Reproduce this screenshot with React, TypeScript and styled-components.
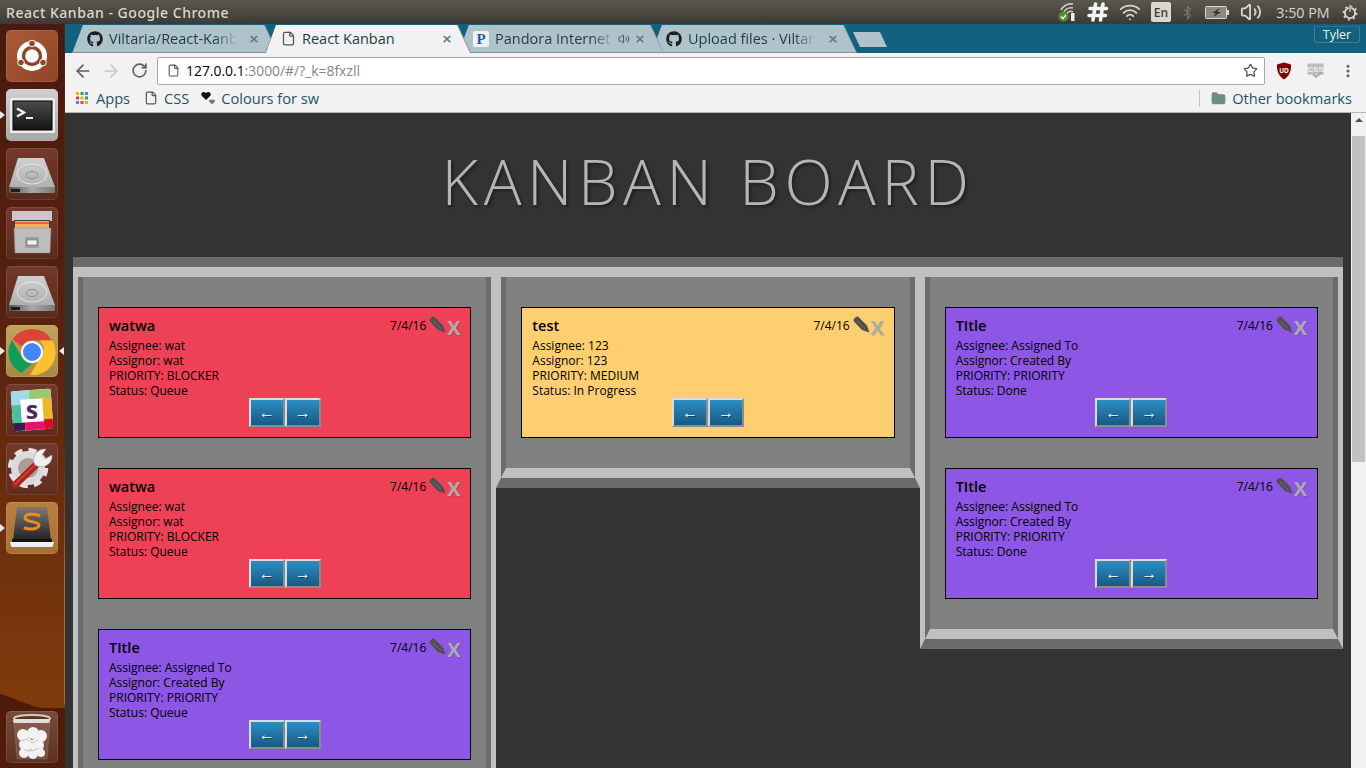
import React from "react";
import styled, { createGlobalStyle } from "styled-components";
import { ArrowLeft, ArrowRight, RotateCw, Star, File, Folder, Wifi, Bluetooth, Volume2, MoreVertical } from "lucide-react";
import { FaGithub } from "react-icons/fa";

const GlobalStyle = createGlobalStyle`
  html, body { margin: 0; padding: 0; height: 100%; overflow: hidden; }
  body { font-family: "Open Sans", "Liberation Sans", sans-serif; background: #333; }
  * { box-sizing: border-box; }
`;

const Desktop = styled.div`
  width: 1366px;
  height: 768px;
  display: flex;
  flex-direction: column;
  overflow: hidden;
`;

const TitleBar = styled.div`
  height: 24px;
  flex: none;
  display: flex;
  align-items: center;
  padding: 0 8px 0 6px;
  background: linear-gradient(#5b574d, #3b3a36);
  color: #dcd8cf;
`;

const WindowTitle = styled.div`
  flex: 1;
  font-family: "Noto Sans", sans-serif;
  font-size: 14px;
  font-weight: 500;
  letter-spacing: 0.53px;
`;

const Tray = styled.div`
  display: flex;
  align-items: center;
  color: #d9d5cc;
`;

const TrayItem = styled.div<{ $w: number }>`
  width: ${(p) => p.$w}px;
  height: 24px;
  display: flex;
  align-items: center;
  justify-content: center;
`;

const LangBox = styled.div`
  width: 20px;
  height: 20px;
  border-radius: 2px;
  background: #dcd8cf;
  color: #3c3b37;
  font-size: 12px;
  font-weight: 600;
  display: flex;
  align-items: center;
  justify-content: center;
`;

const Clock = styled.div`
  font-size: 14.3px;
  white-space: nowrap;
`;

const Body = styled.div`
  flex: 1;
  display: flex;
  min-height: 0;
`;

const Launcher = styled.div`
  position: relative;
  width: 65px;
  flex: none;
  display: flex;
  flex-direction: column;
  gap: 7px;
  padding: 6px 0 5px 6px;
  background: linear-gradient(#4a190f 0, #54200f 35%, #6c2d0d 65%, #84400b 100%);
  border-right: 1px solid;
  border-image: linear-gradient(#4f2410 55%, #b06f1c 75%, #b06f1c 91%, #4e1c09 92%) 1;
`;

const Wave = styled.svg`
  position: absolute;
  left: 0;
  bottom: 0;
`;

const Tile = styled.div<{ $bg: string; $left?: boolean; $right?: boolean; $end?: boolean }>`
  position: relative;
  width: 52px;
  height: 52px;
  flex: none;
  border-radius: 5px;
  background: ${(p) => p.$bg};
  box-shadow: inset 0 0 0 1px rgba(255, 255, 255, 0.1);
  margin-top: ${(p) => (p.$end ? "auto" : "0")};
  svg { display: block; }
  &::before {
    content: "";
    display: ${(p) => (p.$left ? "block" : "none")};
    position: absolute;
    left: -6px;
    top: 22px;
    border: 4px solid transparent;
    border-left: 5px solid #e8e8e8;
  }
  &::after {
    content: "";
    display: ${(p) => (p.$right ? "block" : "none")};
    position: absolute;
    right: -6px;
    top: 22px;
    border: 4px solid transparent;
    border-right: 5px solid #e8e8e8;
  }
`;

const Browser = styled.div`
  flex: 1;
  min-width: 0;
  display: flex;
  flex-direction: column;
`;

const TabStrip = styled.div`
  height: 29px;
  flex: none;
  display: flex;
  align-items: flex-end;
  padding: 0 6px 0 7px;
  background: #12617f;
`;

const Tab = styled.div<{ $active?: boolean; $z: number }>`
  position: relative;
  z-index: ${(p) => p.$z};
  width: 206px;
  height: 28px;
  flex: none;
  margin-right: -13px;
  padding: 0 17px 1px 15px;
  display: flex;
  align-items: center;
  font-size: 14.5px;
  color: #1f3b47;
  &::before, &::after {
    content: "";
    position: absolute;
    inset: 0;
    z-index: -1;
  }
  &::before {
    background: #7f929b;
    clip-path: polygon(0 100%, 11px 0, 193px 0, 206px 100%);
  }
  &::after {
    background: ${(p) => (p.$active ? "#f2f2f2" : "#aec3ca")};
    clip-path: polygon(1px 100%, 11px 0, 192px 0, 205px 100%);
    bottom: ${(p) => (p.$active ? "0" : "1px")};
  }
`;

const TabIcon = styled.div`
  width: 16px;
  height: 16px;
  flex: none;
  margin-right: 6px;
  display: flex;
  align-items: center;
  justify-content: center;
  color: #1b1f23;
`;

const PandoraIcon = styled.div`
  width: 16px;
  height: 16px;
  border-radius: 2px;
  background: #eef2f6;
  color: #1d5da8;
  font-family: "Liberation Serif", serif;
  font-weight: 700;
  font-size: 15px;
  line-height: 16px;
  text-align: center;
`;

const TabLabel = styled.div<{ $fade?: boolean }>`
  flex: 1;
  min-width: 0;
  white-space: nowrap;
  -webkit-mask-image: ${(p) => (p.$fade ? "linear-gradient(to right, #000 calc(100% - 26px), transparent calc(100% - 4px))" : "none")};
  mask-image: ${(p) => (p.$fade ? "linear-gradient(to right, #000 calc(100% - 26px), transparent calc(100% - 4px))" : "none")};
`;

const TabSound = styled(Volume2)`
  flex: none;
  margin-right: -3px;
`;

const TabClose = styled.div`
  width: 14px;
  flex: none;
  margin-left: 6px;
  font-family: "DejaVu Sans", sans-serif;
  font-size: 13px;
  font-weight: 700;
  color: #6a7478;
  text-align: center;
`;

const NewTab = styled.div`
  width: 34px;
  height: 15px;
  margin: 0 0 6px 9px;
  flex: none;
  background: #aec3ca;
  clip-path: polygon(0 0, 27px 0, 34px 100%, 7px 100%);
`;

const Profile = styled.div`
  margin: 0 0 10px auto;
  width: 46px;
  height: 17px;
  border: 1px solid #3e7f98;
  border-top-color: #2a7390;
  border-radius: 0 0 3px 3px;
  color: #f2f2f2;
  font-size: 12.5px;
  line-height: 15px;
  text-align: center;
`;

const Toolbar = styled.div`
  height: 32px;
  flex: none;
  display: flex;
  align-items: flex-start;
  padding: 4px 0 0 4px;
  background: #f2f2f2;
`;

const NavButton = styled.div<{ $off?: boolean }>`
  width: 28px;
  height: 27px;
  flex: none;
  display: flex;
  align-items: center;
  justify-content: center;
  color: ${(p) => (p.$off ? "#c9c9c9" : "#5f5f5f")};
`;

const Omnibox = styled.div`
  width: 1108px;
  height: 28px;
  margin-left: 4px;
  flex: none;
  display: flex;
  align-items: center;
  padding: 0 6px 1px 9px;
  background: #fff;
  border: 1px solid #a9a9a9;
  border-radius: 2px;
  font-size: 13.9px;
  color: #858585;
`;

const Host = styled.span`
  color: #000;
`;

const Url = styled.div`
  flex: 1;
  margin-left: 6px;
  white-space: nowrap;
`;

const ExtSlot = styled.div<{ $w: number }>`
  width: ${(p) => p.$w}px;
  height: 27px;
  flex: none;
  display: flex;
  align-items: center;
  justify-content: center;
  color: #5f5f5f;
`;

const Bookmarks = styled.div`
  height: 28px;
  flex: none;
  display: flex;
  align-items: center;
  padding: 0 14px 1px 11px;
  background: #f2f2f2;
  border-bottom: 1px solid #b5b5b5;
  font-size: 14.6px;
  color: #1d5468;
`;

const Bookmark = styled.div<{ $gap: number; $mr?: number }>`
  display: flex;
  align-items: center;
  gap: ${(p) => p.$gap}px;
  margin-right: ${(p) => p.$mr ?? 14}px;
  white-space: nowrap;
  &:last-child { margin-right: 0; }
`;

const BarDivider = styled.div`
  width: 1px;
  height: 17px;
  margin: 0 11px 0 auto;
  background: #c4c4c4;
`;

const Viewport = styled.div`
  flex: 1;
  min-height: 0;
  display: flex;
`;

const Page = styled.div`
  flex: 1;
  min-width: 0;
  overflow: hidden;
  background: #333;
  padding: 0 8px;
`;

const Heading = styled.h1`
  height: 144px;
  margin: 0;
  padding: 24px 0 0;
  font-size: 63px;
  font-weight: 300;
  line-height: 87px;
  letter-spacing: 5.55px;
  text-align: center;
  color: #b5b5b5;
  text-shadow: 2px 2px 3px #1f1f1f;
`;

const BoardFrame = styled.div`
  border-top: 10px solid #6b6b6b;
`;

const Board = styled.div`
  display: flex;
  align-items: flex-start;
  border-top: 10px solid #c0c0c0;
`;

const Column = styled.div`
  flex: 1 1 0;
  min-width: 0;
  border-style: solid;
  border-width: 0 5px 10px;
  border-color: transparent #c0c0c0 #6b6b6b #c0c0c0;
`;

const ColumnInner = styled.div`
  border-style: solid;
  border-width: 0 5px 10px;
  border-color: transparent #6b6b6b #c0c0c0 #6b6b6b;
  background: #808080;
  padding: 30px 15px;
  display: flex;
  flex-direction: column;
  gap: 30px;
`;

const Card = styled.div<{ $bg: string }>`
  height: 131px;
  flex: none;
  padding: 8px 10px 10px;
  border: 1px solid #000;
  background: ${(p) => p.$bg};
  color: #000;
  font-size: 12px;
  line-height: 15px;
`;

const CardTop = styled.div`
  height: 22px;
  margin-right: -1px;
  display: flex;
  align-items: flex-start;
`;

const CardTitle = styled.div`
  flex: 1;
  font-size: 14.5px;
  font-weight: 600;
  line-height: 20px;
`;

const CardDate = styled.div`
  line-height: 20px;
`;

const EditSlot = styled.div`
  width: 19px;
  height: 18px;
  margin-left: 1px;
  padding: 0 0 0 2px;
`;

const DeleteGlyph = styled.div`
  width: 15px;
  font-family: "Open Sans", sans-serif;
  font-size: 20px;
  font-weight: 700;
  line-height: 24px;
  color: #acacac;
  text-align: center;
  text-shadow: 1px 1px 1px rgba(0, 0, 0, 0.12);
`;

const CardLine = styled.div`
  height: 15px;
  white-space: nowrap;
`;

const MoveRow = styled.div`
  display: flex;
  justify-content: center;
`;

const MoveButton = styled.button`
  width: 36px;
  height: 29px;
  padding: 0;
  border-style: solid;
  border-width: 2px;
  border-color: #dcdcdc #8c8c8c #8c8c8c #dcdcdc;
  background: linear-gradient(#2b8ec4, #175a84);
  color: #fff;
  font-family: "Liberation Sans", sans-serif;
  font-size: 16px;
  line-height: 20px;
  text-shadow: 1px 1px 0 #123c57;
`;

const Scrollbar = styled.div`
  width: 15px;
  flex: none;
  position: relative;
  background: #f1f1f1;
  display: flex;
  flex-direction: column;
  align-items: center;
`;

const ScrollUp = styled.div`
  margin-top: 5px;
  border: 4px solid transparent;
  border-top: none;
  border-bottom: 4px solid #505050;
`;

const ScrollThumb = styled.div`
  width: 13px;
  height: 326px;
  margin-top: 14px;
  background: #c1c1c1;
`;

const PencilIcon = () => (
  <svg width="17" height="17" viewBox="0 0 17 17">
    <path d="M1 5.500C0.200 4.500 0.300 3.500 1 2.700L3 0.900C3.800 0.200 4.800 0.300 5.500 1L14 9.500 16.500 16.500 9 14z" fill="#505050" />
    <path d="M4 5l8 7.500" stroke="#7a6a70" strokeWidth="1" />
  </svg>
);

const UbuntuIcon = () => (
  <svg width="52" height="52" viewBox="0 0 52 52">
    <circle cx="26" cy="26" r="15" fill="#fff" />
    <circle cx="26" cy="26" r="8.500" fill="none" stroke="#8f4526" strokeWidth="3.400" />
    <circle cx="26" cy="13.500" r="3.300" fill="#8f4526" stroke="#fff" />
    <circle cx="15" cy="32.500" r="3.300" fill="#8f4526" stroke="#fff" />
    <circle cx="37" cy="32.500" r="3.300" fill="#8f4526" stroke="#fff" />
  </svg>
);

const TerminalIcon = () => (
  <svg width="52" height="52" viewBox="0 0 52 52">
    <defs>
      <linearGradient id="term" x1="0" y1="0" x2="0" y2="1">
        <stop offset="0" stopColor="#4b4b4b" />
        <stop offset="1" stopColor="#141414" />
      </linearGradient>
    </defs>
    <rect x="4" y="9" width="45" height="35" rx="1" fill="#ececec" />
    <rect x="7" y="12" width="39" height="29" fill="url(#term)" stroke="#000" />
    <path d="M11 19.500l7 4-7 4" fill="none" stroke="#eee" strokeWidth="2.400" />
    <rect x="20" y="28" width="7" height="2" fill="#eee" />
  </svg>
);

const DiskIcon = ({ id }: { id: string }) => (
  <svg width="52" height="52" viewBox="0 0 52 52">
    <defs>
      <linearGradient id={id} x1="0" y1="0" x2="0" y2="1">
        <stop offset="0" stopColor="#d0d0d0" />
        <stop offset="1" stopColor="#b0b0b0" />
      </linearGradient>
      <linearGradient id={`${id}b`} x1="0" y1="0" x2="1" y2="0">
        <stop offset="0" stopColor="#555" />
        <stop offset="0.5" stopColor="#aaa" />
        <stop offset="1" stopColor="#777" />
      </linearGradient>
    </defs>
    <path d="M12 10H38L49 39H3z" fill={`url(#${id})`} />
    <path d="M3 39H49V44a1 1 0 0 1-1 1H4a1 1 0 0 1-1-1z" fill={`url(#${id}b)`} />
    <rect x="5" y="41" width="9" height="3" fill="#1c1c1c" />
    <ellipse cx="26" cy="26" rx="15" ry="10" fill="none" stroke="#e6e6e6" />
    <ellipse cx="26" cy="27" rx="6" ry="3.500" fill="none" stroke="#8e8e8e" />
  </svg>
);

const FilesIcon = () => (
  <svg width="52" height="52" viewBox="0 0 52 52">
    <rect x="6" y="4" width="40" height="10" fill="#c9c9c9" />
    <rect x="8" y="13" width="36" height="10" fill="#3a3a3a" />
    <rect x="9" y="14" width="34" height="8" fill="#eeb35a" />
    <rect x="9" y="15" width="34" height="2" fill="#e06a34" />
    <path d="M8 21H45L44 46H9z" fill="#bdbdbd" stroke="#8a8a8a" strokeWidth="0.500" />
    <rect x="19" y="30" width="14" height="11" rx="1.500" fill="#9f9f9f" />
    <rect x="21" y="33" width="10" height="5" fill="#f2f2f2" stroke="#555" strokeWidth="0.500" />
  </svg>
);

const ChromeIcon = () => (
  <svg width="52" height="52" viewBox="0 0 52 52">
    <path d="M26 4a23 23 0 0 1 20 11.500H26a11.500 11.500 0 0 0-10 5.800L6.500 14.500A23 23 0 0 1 26 4z" fill="#db4437" />
    <path d="M6 15l10 17.500a11.500 11.500 0 0 0 10 6L15.500 48A23 23 0 0 1 6 15z" fill="#0f9d58" />
    <path d="M46.500 15.500A23 23 0 0 1 24 50l11-18.500a11.500 11.500 0 0 0-1-16z" fill="#fbc02d" />
    <circle cx="26" cy="27" r="10" fill="#4285f4" stroke="#fff" strokeWidth="2" />
  </svg>
);

const SlackIcon = () => (
  <svg width="52" height="52" viewBox="0 0 52 52">
    <g transform="rotate(-4 26 26)">
      <rect x="6" y="6" width="40" height="40" rx="3" fill="#fff" />
      <path d="M6 6H24V15H15V20H6z" fill="#9fdce4" />
      <path d="M24 6H46V15H24z" fill="#9fc86d" />
      <path d="M37 15H46V36H37z" fill="#edb72b" />
      <path d="M37 36H46V46H37z" fill="#dc0a2a" />
      <path d="M6 20H15V38H6z" fill="#49c0a0" />
      <path d="M6 38H18V46H6z" fill="#3e1c4e" />
      <path d="M18 38H37V46H18z" fill="#e5136f" />
    </g>
    <text x="26" y="35" textAnchor="middle" fontFamily="Open Sans" fontWeight="700" fontSize="25" fill="#4d2a5e">s</text>
  </svg>
);

const ToolsIcon = () => (
  <svg width="52" height="52" viewBox="0 0 52 52">
    <circle cx="22" cy="25" r="11" fill="#a89c94" />
    <circle cx="22" cy="25" r="13.500" fill="none" stroke="#dadada" strokeWidth="7" />
    <circle cx="22" cy="25" r="18" fill="none" stroke="#e2e2e2" strokeWidth="4.500" strokeDasharray="8 6.140" />
    <path d="M9 42L32 20" stroke="#a8241d" strokeWidth="7" strokeLinecap="round" />
    <path d="M9 41L31 20" stroke="#d24a3f" strokeWidth="1.500" strokeLinecap="round" />
    <path d="M29 22c-4-8 2-17 11-16l-4 6 3 4 7-4c1 9-9 15-17 10z" fill="#efefef" stroke="#999" strokeWidth="0.500" />
  </svg>
);

const SublimeIcon = () => (
  <svg width="52" height="52" viewBox="0 0 52 52">
    <defs>
      <linearGradient id="subl" x1="0" y1="0" x2="0" y2="1">
        <stop offset="0" stopColor="#7a7a7a" />
        <stop offset="0.55" stopColor="#4a4a4a" />
        <stop offset="1" stopColor="#222" />
      </linearGradient>
    </defs>
    <path d="M11 5H41L45 38H7z" fill="url(#subl)" />
    <path d="M4 40H48L47 44a2 2 0 0 1-2 1H7a2 2 0 0 1-2-1z" fill="#f0f0f0" />
    <rect x="6" y="37" width="40" height="3" fill="#141414" />
    <path d="M33 13.500c-5-2-14-2-14 2.500S33 19 33 23s-9 5-14 3" fill="none" stroke="#f08a1c" strokeWidth="3" strokeLinecap="round" />
  </svg>
);

const TrashIcon = () => (
  <svg width="52" height="52" viewBox="0 0 52 52">
    <path d="M8 10L11 48H41L44 10z" fill="rgba(255,255,255,0.12)" stroke="rgba(255,255,255,0.25)" strokeWidth="0.500" />
    <g fill="#f2f2f2">
      <circle cx="17" cy="24" r="6" />
      <circle cx="27" cy="22" r="6" />
      <circle cx="35" cy="25" r="6" />
      <circle cx="20" cy="33" r="7" />
      <circle cx="31" cy="34" r="7" />
      <circle cx="18" cy="42" r="5" />
      <circle cx="27" cy="43" r="5" />
      <circle cx="35" cy="42" r="4" />
    </g>
    <path d="M14 30l7-2 5 4 6-3M18 39l8 1 7-3" fill="none" stroke="#c4c4c4" />
    <ellipse cx="26" cy="7.500" rx="18" ry="3.500" fill="rgba(60,30,20,.5)" stroke="#c9c9c9" strokeWidth="2" />
    <rect x="7" y="8" width="37" height="4" rx="2" fill="#dedede" />
  </svg>
);

const HashTray = () => (
  <svg width="22" height="20" viewBox="0 0 22 20">
    <path d="M8.500 2L6 18M16 2L13.500 18M3 6.500H19.500M2 13.500H18.500" stroke="#f4f4f4" strokeWidth="3.600" strokeLinecap="round" />
  </svg>
);

const SignalTray = () => (
  <svg width="18" height="20" viewBox="0 0 18 20">
    <path d="M3 8a12 12 0 0 1 12-6M6 10a8 8 0 0 1 9-4M9 12a4 4 0 0 1 6-2" fill="none" stroke="#cfcbc2" strokeWidth="1.600" />
    <rect x="13" y="11" width="3.500" height="8" fill="#eee" />
    <circle cx="5.500" cy="14.500" r="5" fill="#4f8f2f" />
    <path d="M3 14.500l2 2 3-3.500" fill="none" stroke="#fff" strokeWidth="1.300" />
  </svg>
);

const BatteryTray = () => (
  <svg width="25" height="13" viewBox="0 0 25 13">
    <rect x="0.500" y="0.500" width="21" height="12" rx="1" fill="#8b8880" stroke="#d9d5cc" />
    <rect x="22" y="4" width="2" height="5" fill="#d9d5cc" />
    <path d="M15 2L7 7h4l-3 4 8-5h-4z" fill="#2d2c29" />
  </svg>
);

const PowerTray = () => (
  <svg width="16" height="17" viewBox="0 0 17 17">
    <circle cx="8.500" cy="9" r="5.500" fill="none" stroke="#d9d5cc" strokeWidth="2" />
    <circle cx="8.500" cy="9" r="7" fill="none" stroke="#d9d5cc" strokeWidth="2" strokeDasharray="2 3.500" />
    <rect x="7.500" y="0" width="2" height="8" fill="#d9d5cc" stroke="#45433e" strokeWidth="0.500" />
  </svg>
);

const AppsIcon = () => {
  const colors = ["#d9453d", "#f0b400", "#2f9e58", "#4285f4"];
  return (
    <svg width="12" height="12" viewBox="0 0 12 12">
      {Array.from({ length: 9 }).map((_, i) => (
        <rect key={i} x={(i % 3) * 4.5} y={Math.floor(i / 3) * 4.5} width="3" height="3" fill={colors[(i * 5 + 1) % 4]} />
      ))}
    </svg>
  );
};

const HeartsIcon = () => (
  <svg width="15" height="14" viewBox="0 0 15 14">
    <path d="M5 9L0.500 4.500C-0.500 2 2 -0.500 5 2 8 -0.500 10.500 2 9.500 4.500z" fill="#111" />
    <path d="M11 13.500L8 10.500C7.500 9 9.500 7.500 11 9 12.500 7.500 14.500 9 14 10.500z" fill="#777" />
  </svg>
);

const ShieldIcon = () => (
  <svg width="16" height="18" viewBox="0 0 16 18">
    <path d="M8 0.500L15 2.500C15.500 9 13 14.500 8 17.500 3 14.500 0.500 9 1 2.500z" fill="#800000" />
    <text x="8" y="11" textAnchor="middle" fontSize="6.500" fontWeight="700" fontFamily="Open Sans" fill="#fff">UD</text>
  </svg>
);

const CssBadge = () => (
  <svg width="18" height="18" viewBox="0 0 18 18">
    <rect x="0.500" y="1.500" width="16" height="11" fill="#bcbcbc" />
    <text x="8.500" y="10" textAnchor="middle" fontSize="8" fontWeight="700" fontFamily="Liberation Sans" fill="#f0f0f0">CSS</text>
    <path d="M6 12l3 3 6-5" fill="none" stroke="#a8a8a8" strokeWidth="2" />
  </svg>
);

type CardData = { title: string; assignee: string; assignor: string; priority: string; status: string; color: string };

const RED = "#ef4155";
const YELLOW = "#fecf71";
const PURPLE = "#8d56e4";

const watwa: CardData = { title: "watwa", assignee: "wat", assignor: "wat", priority: "BLOCKER", status: "Queue", color: RED };
const sample = (status: string): CardData => ({
  title: "TItle",
  assignee: "Assigned To",
  assignor: "Created By",
  priority: "PRIORITY",
  status,
  color: PURPLE,
});

const columns: CardData[][] = [
  [watwa, watwa, sample("Queue")],
  [{ title: "test", assignee: "123", assignor: "123", priority: "MEDIUM", status: "In Progress", color: YELLOW }],
  [sample("Done"), sample("Done")],
];

const KanbanCard = ({ card }: { card: CardData }) => (
  <Card $bg={card.color}>
    <CardTop>
      <CardTitle>{card.title}</CardTitle>
      <CardDate>7/4/16</CardDate>
      <EditSlot><PencilIcon /></EditSlot>
      <DeleteGlyph>X</DeleteGlyph>
    </CardTop>
    <CardLine>Assignee: {card.assignee}</CardLine>
    <CardLine>Assignor: {card.assignor}</CardLine>
    <CardLine>PRIORITY: {card.priority}</CardLine>
    <CardLine>Status: {card.status}</CardLine>
    <MoveRow>
      <MoveButton>←</MoveButton>
      <MoveButton>→</MoveButton>
    </MoveRow>
  </Card>
);

const App = () => {
  return (
    <>
      <GlobalStyle />
      <Desktop>
        <TitleBar>
          <WindowTitle>React Kanban - Google Chrome</WindowTitle>
          <Tray>
            <TrayItem $w={29}><SignalTray /></TrayItem>
            <TrayItem $w={33}><HashTray /></TrayItem>
            <TrayItem $w={32}><Wifi size={22} strokeWidth={2} /></TrayItem>
            <TrayItem $w={30}><LangBox>En</LangBox></TrayItem>
            <TrayItem $w={22}><Bluetooth size={15} color="#77746d" /></TrayItem>
            <TrayItem $w={39}><BatteryTray /></TrayItem>
            <TrayItem $w={27}><Volume2 size={22} /></TrayItem>
            <TrayItem $w={78}><Clock>3:50 PM</Clock></TrayItem>
            <TrayItem $w={16}><PowerTray /></TrayItem>
          </Tray>
        </TitleBar>
        <Body>
          <Launcher>
            <Wave width="64" height="80" viewBox="0 0 64 80">
              <path d="M0 6C10 8 18 13 25 15 32 17 36 20 44 20L64 20V80H0z" fill="#4e1c09" />
            </Wave>
            <Tile $bg="linear-gradient(135deg,#a95a38,#8f4526)"><UbuntuIcon /></Tile>
            <Tile $bg="linear-gradient(#cfcfcf,#a8a8a8)" $left><TerminalIcon /></Tile>
            <Tile $bg="linear-gradient(#74392c,#5a2a1d)"><DiskIcon id="d1" /></Tile>
            <Tile $bg="linear-gradient(#74392c,#5a2a1d)"><FilesIcon /></Tile>
            <Tile $bg="linear-gradient(#74392c,#5a2a1d)"><DiskIcon id="d2" /></Tile>
            <Tile $bg="linear-gradient(#c2a35a,#a68a45)" $left $right><ChromeIcon /></Tile>
            <Tile $bg="linear-gradient(#74392c,#5f2d1d)"><SlackIcon /></Tile>
            <Tile $bg="linear-gradient(#74392c,#5f2d1d)"><ToolsIcon /></Tile>
            <Tile $bg="linear-gradient(#b8813f,#aa6f33)" $left><SublimeIcon /></Tile>
            <Tile $bg="linear-gradient(#7a4a38,#5d3222)" $end><TrashIcon /></Tile>
          </Launcher>
          <Browser>
            <TabStrip>
              <Tab $z={3}>
                <TabIcon><FaGithub size={16} /></TabIcon>
                <TabLabel $fade>Viltaria/React-Kanb</TabLabel>
                <TabClose>×</TabClose>
              </Tab>
              <Tab $z={5} $active>
                <TabIcon><File size={15} color="#555" /></TabIcon>
                <TabLabel>React Kanban</TabLabel>
                <TabClose>×</TabClose>
              </Tab>
              <Tab $z={2}>
                <TabIcon><PandoraIcon>P</PandoraIcon></TabIcon>
                <TabLabel $fade>Pandora Internet</TabLabel>
                <TabSound size={12} color="#555" />
                <TabClose>×</TabClose>
              </Tab>
              <Tab $z={1}>
                <TabIcon><FaGithub size={16} /></TabIcon>
                <TabLabel $fade>Upload files · Viltari</TabLabel>
                <TabClose>×</TabClose>
              </Tab>
              <NewTab />
              <Profile>Tyler</Profile>
            </TabStrip>
            <Toolbar>
              <NavButton><ArrowLeft size={20} /></NavButton>
              <NavButton $off><ArrowRight size={20} /></NavButton>
              <NavButton><RotateCw size={17} strokeWidth={2.4} /></NavButton>
              <Omnibox>
                <File size={13} color="#555" />
                <Url><Host>127.0.0.1</Host>:3000/#/?_k=8fxzll</Url>
                <Star size={15} color="#555" strokeWidth={2} />
              </Omnibox>
              <ExtSlot $w={38}><ShieldIcon /></ExtSlot>
              <ExtSlot $w={26}><CssBadge /></ExtSlot>
              <ExtSlot $w={38}><MoreVertical size={16} strokeWidth={2.6} /></ExtSlot>
            </Toolbar>
            <Bookmarks>
              <Bookmark $gap={8}><AppsIcon />Apps</Bookmark>
              <Bookmark $gap={6} $mr={12}><File size={14} color="#555" />CSS</Bookmark>
              <Bookmark $gap={5}><HeartsIcon />Colours for sw</Bookmark>
              <BarDivider />
              <Bookmark $gap={6}><Folder size={15} color="#6c8e85" fill="#6c8e85" />Other bookmarks</Bookmark>
            </Bookmarks>
            <Viewport>
              <Page>
                <Heading>KANBAN BOARD</Heading>
                <BoardFrame>
                  <Board>
                    {columns.map((cards, i) => (
                      <Column key={i}>
                        <ColumnInner>
                          {cards.map((card, j) => (
                            <KanbanCard key={j} card={card} />
                          ))}
                        </ColumnInner>
                      </Column>
                    ))}
                  </Board>
                </BoardFrame>
              </Page>
              <Scrollbar>
                <ScrollUp />
                <ScrollThumb />
              </Scrollbar>
            </Viewport>
          </Browser>
        </Body>
      </Desktop>
    </>
  );
};

export default App;
